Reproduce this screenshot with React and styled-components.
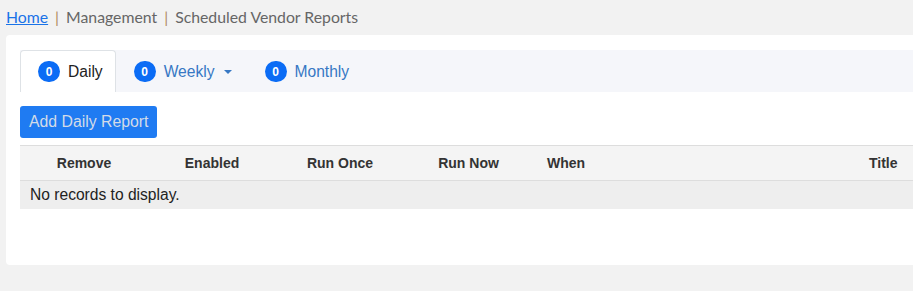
import React from 'react';
import styled, { createGlobalStyle } from 'styled-components';

const Global = createGlobalStyle`
html, body {
  margin: 0;
  padding: 0;
  background: #f2f2f2;
  overflow: hidden;
}
`

const tabs = [
    { name: 'Daily', count: 0, active: true },
    { name: 'Weekly', count: 0, dropdown: true },
    { name: 'Monthly', count: 0 },
];

const columns = [
    { name: 'Remove', align: 'center' },
    { name: 'Enabled', align: 'center' },
    { name: 'Run Once', align: 'center' },
    { name: 'Run Now', align: 'center' },
    { name: 'When', align: 'left' },
    { name: 'Title', align: 'left' },
];

export default function App() {
    return (
        <>
            <Global />
            <Page>
                <Breadcrumb>
                    <Link href="#">Home</Link>
                    <Sep>|</Sep>
                    <Crumb>Management</Crumb>
                    <Sep>|</Sep>
                    <Crumb>Scheduled Vendor Reports</Crumb>
                </Breadcrumb>
                <Card>
                    <TabBar>
                        {tabs.map(t => (
                            <Tab key={t.name} active={t.active} dropdown={t.dropdown}>
                                <Badge>{t.count}</Badge>
                                {t.name}
                                {t.dropdown && <Caret />}
                            </Tab>
                        ))}
                    </TabBar>
                    <Button>Add Daily Report</Button>
                    <Table>
                        <HeadRow>
                            {columns.map(c => (
                                <HeadCell key={c.name} align={c.align}>{c.name}</HeadCell>
                            ))}
                        </HeadRow>
                        <EmptyRow>No records to display.</EmptyRow>
                    </Table>
                </Card>
            </Page>
        </>
    )
}

const Page = styled.div`
padding: 6px 0 0 6px;
width: 1000px;
`
const Breadcrumb = styled.div`
display: flex;
align-items: center;
height: 20px;
font-family: 'Lato', 'Open Sans', sans-serif;
font-size: 15.8px;
color: #666666;
margin-bottom: 9px;
`
const Link = styled.a`
color: #1a73e8;
text-decoration: underline;
`
const Sep = styled.span`
color: #b08a60;
margin: 0 7px;
`
const Crumb = styled.span`
color: #666666;
`
const Card = styled.div`
background: #ffffff;
border-radius: 4px;
padding: 15px 14px 56px 14px;
`
const TabBar = styled.div`
display: flex;
align-items: stretch;
height: 42px;
background: #f5f6fa;
`
const Tab = styled.div`
display: flex;
align-items: center;
padding: 0 ${p => p.active ? '12px' : p.dropdown ? '14px' : '18px'} 0 17px;
font-family: 'Liberation Sans', Arial, sans-serif;
font-size: 15.6px;
color: ${p => p.active ? '#222222' : '#3778c4'};
background: ${p => p.active ? '#ffffff' : 'transparent'};
border: 1px solid ${p => p.active ? '#dee2e6' : 'transparent'};
border-bottom: none;
border-radius: 4px 4px 0 0;
box-sizing: border-box;
`
const Badge = styled.span`
display: inline-flex;
align-items: center;
justify-content: center;
width: 22px;
height: 21px;
border-radius: 11px;
background: #0b6cf5;
color: #ffffff;
font-family: 'Liberation Sans', Arial, sans-serif;
font-size: 12px;
font-weight: 700;
margin-right: 8px;
`
const Caret = styled.span`
display: inline-block;
margin-left: 9px;
width: 0;
height: 0;
border-left: 4px solid transparent;
border-right: 4px solid transparent;
border-top: 4px solid #3778c4;
`
const Button = styled.button`
display: block;
margin-top: 14px;
height: 32px;
padding: 0 9px;
border: none;
border-radius: 3px;
background: #1f7bf2;
color: #d3dbe8;
font-family: 'Liberation Sans', Arial, sans-serif;
font-size: 15.8px;
`
const Table = styled.div`
margin-top: 7px;
font-family: 'Liberation Sans', Arial, sans-serif;
`
const HeadRow = styled.div`
display: grid;
grid-template-columns: 128px 128px 128px 129px 322px 1fr;
height: 34px;
align-items: center;
background: #f4f4f4;
border-top: 1px solid #dddddd;
border-bottom: 1px solid #dddddd;
`
const HeadCell = styled.div`
text-align: ${p => p.align};
padding-left: ${p => p.align === 'left' ? '14px' : '0'};
font-size: 14px;
font-weight: 700;
color: #333333;
`
const EmptyRow = styled.div`
height: 28px;
line-height: 27px;
padding-left: 10px;
background: #eeeeee;
font-size: 15.6px;
color: #222222;
`
